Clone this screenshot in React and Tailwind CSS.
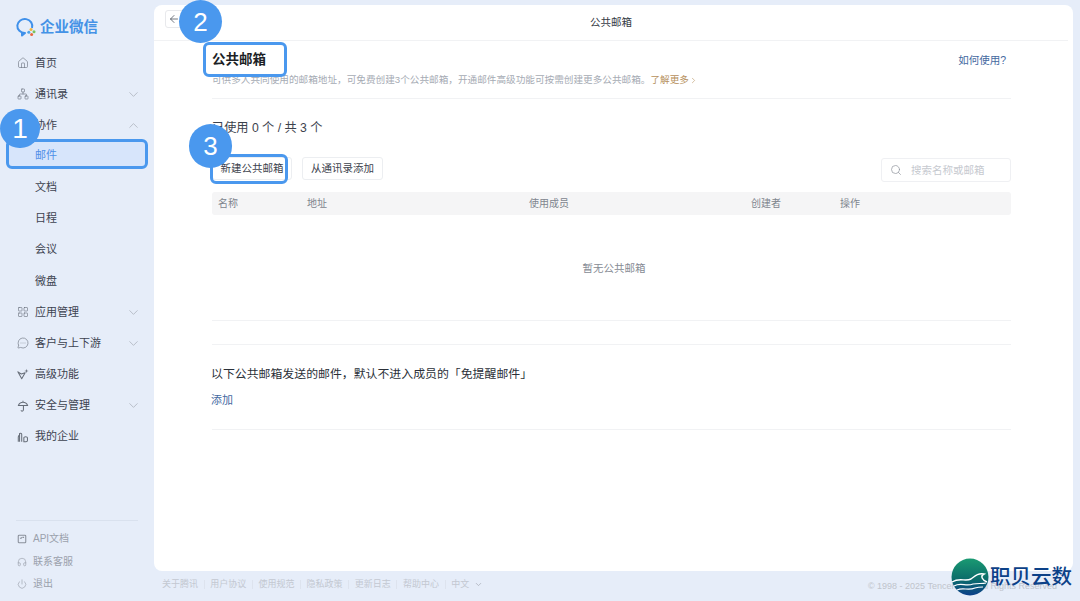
import React from "react";
import {
	ArrowLeft,
	ChevronDown,
	ChevronRight,
	ChevronUp,
	Headphones,
	House,
	LayoutGrid,
	MessageCircleMore,
	Network,
	Power,
	Search,
} from "lucide-react";

const font = { fontFamily: '"Liberation Sans", "Noto Sans CJK SC", sans-serif' };

const SparkV = (props) => (
	<svg viewBox="0 0 14 14" fill="none" stroke="currentColor" strokeWidth="0.9" {...props}>
		<path d="M1 4.5 L5.5 12.5 L9.5 5.5 L5 7 Z" strokeLinejoin="round" />
		<path d="M11 1 L11.5 3 L13.5 3.5 L11.5 4 L11 6 L10.5 4 L8.5 3.5 L10.5 3 Z" fill="currentColor" stroke="none" />
	</svg>
);

const Buildings = (props) => (
	<svg viewBox="0 0 14 14" fill="none" stroke="currentColor" strokeWidth="0.9" {...props}>
		<path d="M1.5 12.5 V7 Q1.5 5.5 3 5 V12.5 M3 5 L3 3 Q5.5 2 5.5 4 V12.5" />
		<path d="M8 12.5 V8 Q8 6.8 10 6.8 Q12.2 6.8 12.2 8 V11 Q12.2 12.5 10.5 12.5 H8 Z" />
	</svg>
);

const Shelter = (props) => (
	<svg viewBox="0 0 14 14" fill="none" stroke="currentColor" strokeWidth="0.9" {...props}>
		<path d="M7 1 V2.5 M1.5 6.5 Q3 2.5 7 2.5 Q11 2.5 12.5 6.5 Z" strokeLinejoin="round" />
		<path d="M7.5 6.5 V11.5 Q7.5 13 6 13 Q4.8 13 4.8 12" />
	</svg>
);

const ApiDoc = (props) => (
	<svg viewBox="0 0 12 12" fill="none" stroke="currentColor" strokeWidth="0.9" {...props}>
		<rect x="1.5" y="1.5" width="9" height="9" rx="1" />
		<path d="M3.5 5 H5 L5.8 4 M6.5 4 H8.5" />
	</svg>
);

const navItems = [
	{ name: "首页", Icon: House },
	{ name: "通讯录", Icon: Network, arrow: "down" },
	{ name: "协作", arrow: "up" },
	{ name: "邮件", sub: true, active: true },
	{ name: "文档", sub: true },
	{ name: "日程", sub: true },
	{ name: "会议", sub: true },
	{ name: "微盘", sub: true },
	{ name: "应用管理", Icon: LayoutGrid, arrow: "down" },
	{ name: "客户与上下游", Icon: MessageCircleMore, arrow: "down" },
	{ name: "高级功能", Icon: SparkV },
	{ name: "安全与管理", Icon: Shelter, arrow: "down" },
	{ name: "我的企业", Icon: Buildings },
];

const bottomItems = [
	{ name: "API文档", Icon: ApiDoc, cls: "h-[22px]" },
	{ name: "联系客服", Icon: Headphones, cls: "h-[23px]" },
	{ name: "退出", Icon: Power, cls: "h-[22px]" },
];

const footerLinks = ["关于腾讯", "用户协议", "使用规范", "隐私政策", "更新日志", "帮助中心"];

const Sidebar = () => (
	<aside className="w-[154px] shrink-0 h-full flex flex-col pt-[12px] pb-[6px]">
		<div className="flex items-center h-[30px] pl-[16px] gap-[4px]">
			<svg viewBox="0 0 20 20" className="w-[20px] h-[20px]" fill="none">
				<path d="M16 11 A7.5 7 0 1 0 9 16 L6 18.5 L6 14.8" stroke="#3f90ea" strokeWidth="2" strokeLinejoin="round" />
				<circle cx="15" cy="12.5" r="1.5" fill="#f3b63f" />
				<circle cx="18" cy="14.8" r="1.5" fill="#7cc35c" />
				<circle cx="12.8" cy="15.3" r="1.5" fill="#4fa3e8" />
				<circle cx="15.6" cy="17.6" r="1.5" fill="#e8683f" />
			</svg>
			<span className="text-[14.5px] font-bold text-[#4492e6] leading-none">企业微信</span>
		</div>
		<nav className="flex flex-col mt-[5.5px]">
			{navItems.map(({ name, Icon, arrow, active }) => (
				<div key={name} className="h-[31.15px] flex items-center relative pl-[17px] pr-[13px]">
					<span className="w-[18px] shrink-0 flex items-center">
						{Icon && <Icon className="w-[12px] h-[12px] text-[#666d78]" strokeWidth={1.2} />}
					</span>
					<span className="text-[11px] leading-none text-[#3d4350]">{name}</span>
					{arrow === "down" && <ChevronDown className="w-[15px] h-[15px] ml-auto text-[#a3a9b3]" strokeWidth={1.1} />}
					{arrow === "up" && <ChevronUp className="w-[15px] h-[15px] ml-auto text-[#a3a9b3]" strokeWidth={1.1} />}
					{active && (
						<div className="absolute left-[6px] top-[-2px] w-[142px] h-[30px] rounded-[6px] border-[3px] border-[#4a98ee] bg-[#d7e5fb] flex items-center pl-[26px] pt-[3px]">
							<span className="text-[11px] leading-none text-[#4f8fe8]">{name}</span>
						</div>
					)}
				</div>
			))}
		</nav>
		<div className="mt-auto mx-[16px] border-t border-[#d9e1ee]" />
		<div className="flex flex-col mt-[7px]">
			{bottomItems.map(({ name, Icon, cls }) => (
				<div key={name} className={`flex items-center gap-[6px] pl-[17px] ${cls}`}>
					<Icon className="w-[10px] h-[10px] text-[#8b919c]" strokeWidth={1.3} />
					<span className="text-[10px] leading-none text-[#9ba1ac]">{name}</span>
				</div>
			))}
		</div>
	</aside>
);

const MainCard = () => (
	<main className="h-[566px] bg-white rounded-[8px] flex flex-col">
		<header className="h-[36px] mr-[5px] shrink-0 border-b border-[#f1f2f4] relative flex items-center justify-center">
			<span className="text-[10.5px] text-[#333a45]">公共邮箱</span>
			<div className="absolute left-[11px] top-[5px] w-[26px] h-[18px] rounded-[3px] border border-[#e8e9ec] flex items-center pl-[2px]">
				<ArrowLeft className="w-[12px] h-[12px] text-[#444b57]" strokeWidth={1.5} />
			</div>
		</header>

		<div className="ml-[58px] mr-[62px] flex flex-col">
			{/* heading */}
			<div className="h-[58px] border-b border-[#f1f2f4] relative">
				<div className="absolute left-[-9px] top-[1px] w-[84px] h-[35px] rounded-[6px] border-[3px] border-[#4a98ee] bg-white flex items-center pl-[6px] z-10">
					<h1 className="text-[13.5px] font-bold text-[#1c1f26] leading-none">公共邮箱</h1>
				</div>
				<a className="absolute right-[5px] top-[14px] text-[10.5px] leading-none text-[#44699f]">如何使用?</a>
				<p className="absolute left-0 top-[33px] text-[9.64px] leading-[12px] text-[#a6abb4] whitespace-nowrap flex items-center">
					可供多人共同使用的邮箱地址，可免费创建3个公共邮箱，开通邮件高级功能可按需创建更多公共邮箱。
					<span className="text-[#b6905c] flex items-center">
						了解更多
						<ChevronRight className="w-[9px] h-[9px]" strokeWidth={1.5} />
					</span>
				</p>
			</div>

			{/* usage */}
			<p className="mt-[20px] text-[12.2px] leading-[18px] text-[#3c424d]">已使用 0 个 / 共 3 个</p>

			{/* toolbar */}
			<div className="mt-[20px] h-[23px] flex items-center relative">
				<div className="relative w-[80px] h-[23px] rounded-[3px] border border-[#eceef1] flex items-center justify-center">
					<div className="absolute left-[-3px] top-[-4px] w-[78px] h-[30px] rounded-[6px] border-[3px] border-[#4a98ee]" />
					<span className="text-[10.5px] leading-none text-[#3c424d] whitespace-nowrap">新建公共邮箱</span>
				</div>
				<div className="ml-[10px] w-[81px] h-[23px] rounded-[3px] border border-[#eceef1] flex items-center justify-center">
					<span className="text-[10.5px] leading-none text-[#3c424d]">从通讯录添加</span>
				</div>
				<div className="ml-auto mt-[2px] w-[130px] h-[24px] rounded-[3px] border border-[#eff0f3] flex items-center pl-[8px] gap-[9px]">
					<Search className="w-[12px] h-[12px] text-[#8f949c]" strokeWidth={1.4} />
					<span className="text-[10.5px] leading-none text-[#c6c9cf] pt-[1px]">搜索名称或邮箱</span>
				</div>
			</div>

			{/* table */}
			<div className="mt-[12px] h-[23px] rounded-[3px] bg-[#f5f5f6] grid grid-cols-[89px_222px_222px_89px_1fr] pl-[6px] items-center text-[10px] leading-none text-[#80858e]">
				<span>名称</span>
				<span>地址</span>
				<span>使用成员</span>
				<span>创建者</span>
				<span>操作</span>
			</div>
			<div className="h-[106px] border-b border-[#f1f2f4] flex items-center justify-center pl-[5px]">
				<span className="text-[10.5px] leading-none text-[#868b94] pt-[1px]">暂无公共邮箱</span>
			</div>

			{/* exempt section */}
			<div className="h-[86px] mt-[23px] border-t border-b border-[#f1f2f4] flex flex-col pt-[21px]">
				<p className="text-[11.9px] leading-[17px] text-[#2b3038] -ml-[1px]">以下公共邮箱发送的邮件，默认不进入成员的「免提醒邮件」</p>
				<a className="mt-[12px] text-[11px] leading-none text-[#44699f] -ml-[1px]">添加</a>
			</div>
		</div>
	</main>
);

const Footer = () => (
	<footer className="h-[26px] flex items-center pl-[8px] pr-[16px] text-[9px] leading-none text-[#c3c8d1]">
		{footerLinks.map((link) => (
			<React.Fragment key={link}>
				<span>{link}</span>
				<span className="w-[1px] h-[9px] bg-[#dde3ee] mx-[5.6px]" />
			</React.Fragment>
		))}
		<span>中文</span>
		<ChevronDown className="w-[9px] h-[9px] ml-[5px] text-[#a9aeb8]" strokeWidth={2} />
		<span className="ml-auto mt-[4px] text-[9px] text-[#c0c4cc]">© 1998 - 2025 Tencent Inc. All Rights Reserved</span>
	</footer>
);

const Badge = ({ className, n }) => (
	<div className={`absolute z-20 rounded-full bg-[#4a98ee] flex items-center justify-center text-white leading-none ${className}`}>
		{n}
	</div>
);

const Watermark = () => (
	<div className="absolute z-30 left-[951px] top-[558px] flex items-center">
		<svg viewBox="0 0 38 38" className="w-[38px] h-[38px]">
			<defs>
				<linearGradient id="globe" x1="0" y1="0" x2="0" y2="1">
					<stop offset="0" stopColor="#1a9a72" />
					<stop offset="0.55" stopColor="#0c6d6a" />
					<stop offset="1" stopColor="#0b3f8a" />
				</linearGradient>
			</defs>
			<circle cx="19" cy="19" r="18.5" fill="url(#globe)" />
			<path d="M1 24 C9 19 14 24 20 21 C24 18 27 15 33 16 C29 18 31 22 36 24" fill="none" stroke="#fff" strokeWidth="1.4" />
			<path d="M3 28 C10 24 15 29 22 26 C27 25 31 26 35 25" fill="none" stroke="#fff" strokeWidth="1.2" />
			<path d="M6 32 C12 29 17 33 24 30 C27 29 30 29 32 29" fill="none" stroke="#fff" strokeWidth="1.1" />
		</svg>
		<span className="ml-[1px] text-[20.5px] leading-none font-medium text-[#0c4188] whitespace-nowrap">职贝云数</span>
	</div>
);

export default function App() {
	return (
		<div className="relative w-[1080px] h-[601px] overflow-hidden bg-[#e6edf9] flex" style={font}>
			<Sidebar />
			<div className="flex-1 pt-[5px] pr-[7px] flex flex-col min-w-0">
				<MainCard />
				<Footer />
			</div>
			<Badge className="left-0 top-[109px] w-[40px] h-[39px] text-[28px]" n="1" />
			<Badge className="left-[179px] top-0 w-[43px] h-[43px] text-[26px]" n="2" />
			<Badge className="left-[189px] top-[124px] w-[43px] h-[44px] text-[26px]" n="3" />
			<Watermark />
		</div>
	);
}
